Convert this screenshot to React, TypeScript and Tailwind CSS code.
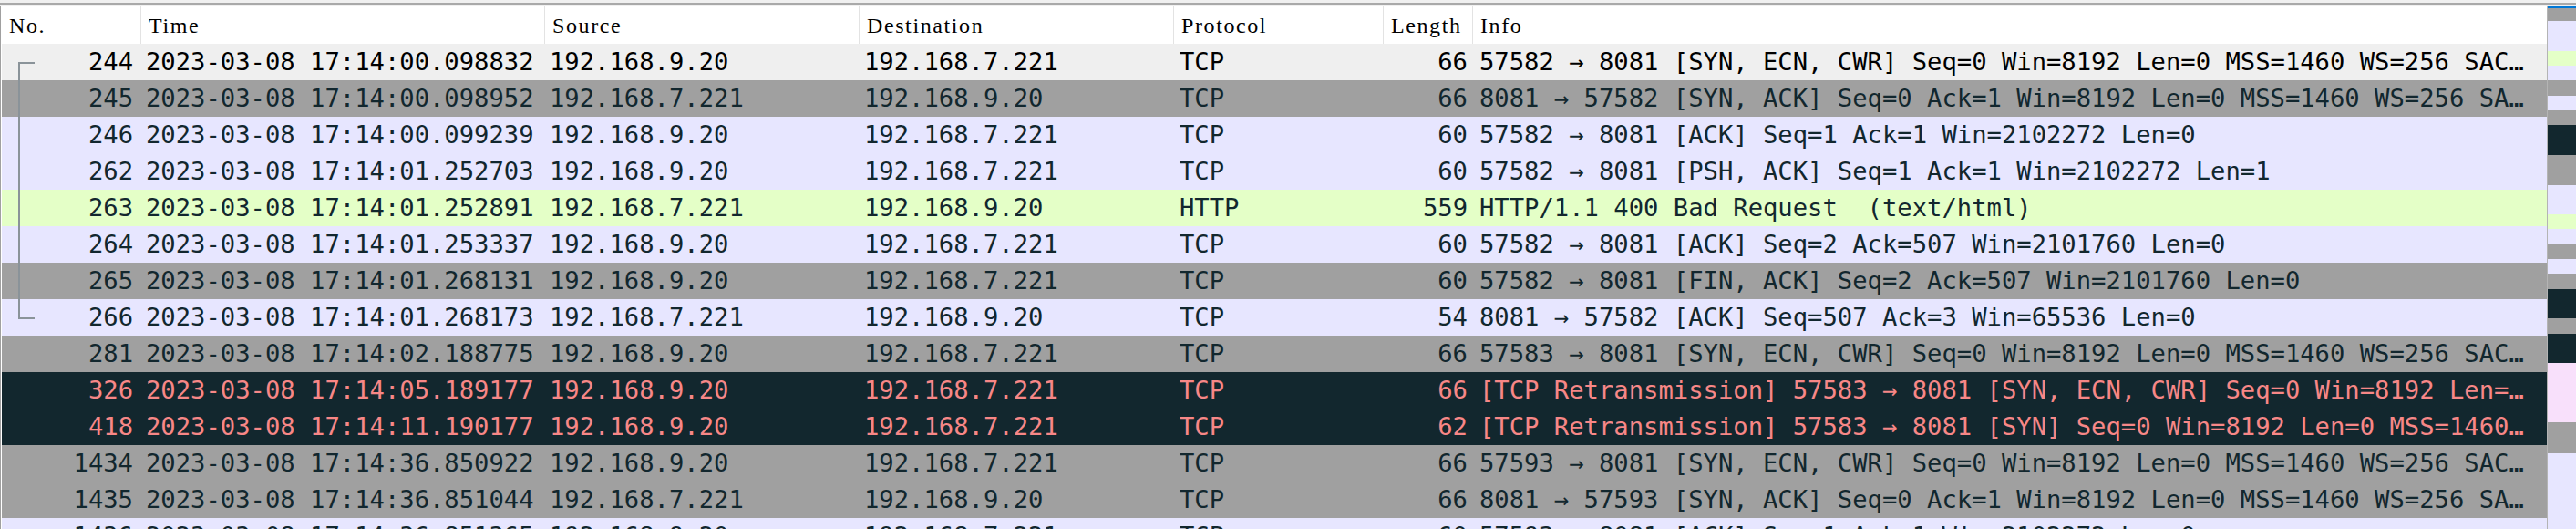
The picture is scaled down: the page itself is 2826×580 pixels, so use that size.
import React from "react";

type Kind = "sel" | "syn" | "tcp" | "http" | "bad";
type Tree = "start" | "mid" | "end" | undefined;

interface Packet {
  no: string;
  time: string;
  src: string;
  dst: string;
  proto: string;
  len: string;
  info: string;
  kind: Kind;
  tree?: Tree;
}

const A = "192.168.9.20";
const B = "192.168.7.221";

const PACKETS: Packet[] = [
  { no: "244", time: "2023-03-08 17:14:00.098832", src: A, dst: B, proto: "TCP", len: "66", info: "57582 → 8081 [SYN, ECN, CWR] Seq=0 Win=8192 Len=0 MSS=1460 WS=256 SACK_PERM", kind: "sel", tree: "start" },
  { no: "245", time: "2023-03-08 17:14:00.098952", src: B, dst: A, proto: "TCP", len: "66", info: "8081 → 57582 [SYN, ACK] Seq=0 Ack=1 Win=8192 Len=0 MSS=1460 WS=256 SACK_PERM", kind: "syn", tree: "mid" },
  { no: "246", time: "2023-03-08 17:14:00.099239", src: A, dst: B, proto: "TCP", len: "60", info: "57582 → 8081 [ACK] Seq=1 Ack=1 Win=2102272 Len=0", kind: "tcp", tree: "mid" },
  { no: "262", time: "2023-03-08 17:14:01.252703", src: A, dst: B, proto: "TCP", len: "60", info: "57582 → 8081 [PSH, ACK] Seq=1 Ack=1 Win=2102272 Len=1", kind: "tcp", tree: "mid" },
  { no: "263", time: "2023-03-08 17:14:01.252891", src: B, dst: A, proto: "HTTP", len: "559", info: "HTTP/1.1 400 Bad Request  (text/html)", kind: "http", tree: "mid" },
  { no: "264", time: "2023-03-08 17:14:01.253337", src: A, dst: B, proto: "TCP", len: "60", info: "57582 → 8081 [ACK] Seq=2 Ack=507 Win=2101760 Len=0", kind: "tcp", tree: "mid" },
  { no: "265", time: "2023-03-08 17:14:01.268131", src: A, dst: B, proto: "TCP", len: "60", info: "57582 → 8081 [FIN, ACK] Seq=2 Ack=507 Win=2101760 Len=0", kind: "syn", tree: "mid" },
  { no: "266", time: "2023-03-08 17:14:01.268173", src: B, dst: A, proto: "TCP", len: "54", info: "8081 → 57582 [ACK] Seq=507 Ack=3 Win=65536 Len=0", kind: "tcp", tree: "end" },
  { no: "281", time: "2023-03-08 17:14:02.188775", src: A, dst: B, proto: "TCP", len: "66", info: "57583 → 8081 [SYN, ECN, CWR] Seq=0 Win=8192 Len=0 MSS=1460 WS=256 SACK_PERM", kind: "syn" },
  { no: "326", time: "2023-03-08 17:14:05.189177", src: A, dst: B, proto: "TCP", len: "66", info: "[TCP Retransmission] 57583 → 8081 [SYN, ECN, CWR] Seq=0 Win=8192 Len=0 MSS=1460 WS=256 SACK_PERM", kind: "bad" },
  { no: "418", time: "2023-03-08 17:14:11.190177", src: A, dst: B, proto: "TCP", len: "62", info: "[TCP Retransmission] 57583 → 8081 [SYN] Seq=0 Win=8192 Len=0 MSS=1460 WS=256 SACK_PERM", kind: "bad" },
  { no: "1434", time: "2023-03-08 17:14:36.850922", src: A, dst: B, proto: "TCP", len: "66", info: "57593 → 8081 [SYN, ECN, CWR] Seq=0 Win=8192 Len=0 MSS=1460 WS=256 SACK_PERM", kind: "syn" },
  { no: "1435", time: "2023-03-08 17:14:36.851044", src: B, dst: A, proto: "TCP", len: "66", info: "8081 → 57593 [SYN, ACK] Seq=0 Ack=1 Win=8192 Len=0 MSS=1460 WS=256 SACK_PERM", kind: "syn" },
  { no: "1436", time: "2023-03-08 17:14:36.851365", src: A, dst: B, proto: "TCP", len: "60", info: "57593 → 8081 [ACK] Seq=1 Ack=1 Win=2102272 Len=0", kind: "tcp" },
];

const ROW_STYLE: Record<Kind, string> = {
  sel: "bg-[#efefef] text-black",
  syn: "bg-[#a0a0a0] text-[#12272e]",
  tcp: "bg-[#e7e6ff] text-[#12272e]",
  http: "bg-[#e4ffc7] text-[#12272e]",
  bad: "bg-[#12272e] text-[#f78787]",
};

// intelligent scrollbar strip on the right
const MINIMAP: string[] = [
  "h-[2px] bg-[#0078d7]",
  "h-[14px] bg-[#a0a0a0]",
  "h-[33px] bg-[#e7e6ff]",
  "h-[16px] bg-[#e4ffc7]",
  "h-[16px] bg-[#e7e6ff]",
  "h-[17px] bg-[#a0a0a0]",
  "h-[16px] bg-[#e7e6ff]",
  "h-[16px] bg-[#a0a0a0]",
  "h-[33px] bg-[#12272e]",
  "h-[33px] bg-[#a0a0a0]",
  "h-[32px] bg-[#e7e6ff]",
  "h-[16px] bg-[#e4ffc7]",
  "h-[17px] bg-[#e7e6ff]",
  "h-[16px] bg-[#a0a0a0]",
  "h-[16px] bg-[#e7e6ff]",
  "h-[17px] bg-[#a0a0a0]",
  "h-[32px] bg-[#12272e]",
  "h-[17px] bg-[#a0a0a0]",
  "h-[32px] bg-[#12272e]",
  "h-[65px] bg-[#f8e0fb]",
  "h-[34px] bg-[#a0a0a0]",
  "flex-1 bg-[#e7e6ff]",
];

const mono = "font-['DejaVu_Sans_Mono',monospace] text-[27.2px]";

const TreeMark = ({ tree }: { tree: Tree }) => {
  if (!tree) return null;
  return (
    <>
      {tree === "start" && (
        <>
          <span className="absolute left-[18px] top-[20px] bottom-0 w-[2px] bg-[#8a9399]" />
          <span className="absolute left-[18px] top-[20px] h-[2px] w-[18px] bg-[#8a9399]" />
        </>
      )}
      {tree === "mid" && <span className="absolute left-[18px] top-0 bottom-0 w-[2px] bg-[#8a9399]" />}
      {tree === "end" && (
        <>
          <span className="absolute left-[18px] top-0 h-[22px] w-[2px] bg-[#8a9399]" />
          <span className="absolute left-[18px] top-[20px] h-[2px] w-[18px] bg-[#8a9399]" />
        </>
      )}
    </>
  );
};

const HeaderCell = ({ label, className }: { label: string; className: string }) => (
  <div
    className={`${className} flex items-center pl-[8px] h-full font-['Liberation_Serif',serif] text-[24px] tracking-[1.6px] text-black`}
  >
    {label}
  </div>
);

const PacketRow = ({ p }: { p: Packet }) => (
  <div className={`flex h-[40px] shrink-0 items-center whitespace-pre ${mono} ${ROW_STYLE[p.kind]}`}>
    <div className="relative w-[152px] h-full flex items-center justify-end pr-[8px]">
      <TreeMark tree={p.tree} />
      {p.no}
    </div>
    <div className="w-[443px] pl-[6px]">{p.time}</div>
    <div className="w-[345px] pl-[6px]">{p.src}</div>
    <div className="w-[345px] pl-[6px]">{p.dst}</div>
    <div className="w-[230px] pl-[7px]">{p.proto}</div>
    <div className="w-[98px] pr-[5px] text-right">{p.len}</div>
    <div className="w-[1179px] pl-[8px] pr-[20px] overflow-hidden text-ellipsis">{p.info}</div>
  </div>
);

export default function App() {
  return (
    <div className="w-[2826px] h-[580px] overflow-hidden bg-[#f0f0f0] flex flex-col">
      <div className="h-[3px] shrink-0 bg-[#f0f0f0]" />
      <div className="h-[2px] shrink-0 bg-[#a9a9a9]" />
      <div className="h-[2px] shrink-0 bg-[#f0f0f0]" />
      <div className="flex flex-1 min-h-0">
        <div className="w-[2794px] border-l border-[#a0a0a0] bg-white pl-px flex flex-col overflow-hidden">
          <div className="flex h-[41px] shrink-0 bg-white">
            <HeaderCell label="No." className="w-[152px]" />
            <HeaderCell label="Time" className="w-[443px] border-l border-[#e3e3e3]" />
            <HeaderCell label="Source" className="w-[345px] border-l border-[#e3e3e3]" />
            <HeaderCell label="Destination" className="w-[345px] border-l border-[#e3e3e3]" />
            <HeaderCell label="Protocol" className="w-[230px] border-l border-[#e3e3e3]" />
            <HeaderCell label="Length" className="w-[98px] border-l border-[#e3e3e3]" />
            <HeaderCell label="Info" className="w-[1179px] border-l border-[#e3e3e3]" />
          </div>
          {PACKETS.map((p) => (
            <PacketRow key={p.no} p={p} />
          ))}
        </div>
        <div className="w-px bg-[#b4b4b4]" />
        <div className="w-[31px] flex flex-col">
          {MINIMAP.map((c, i) => (
            <div key={i} className={`shrink-0 ${c}`} />
          ))}
        </div>
      </div>
    </div>
  );
}
